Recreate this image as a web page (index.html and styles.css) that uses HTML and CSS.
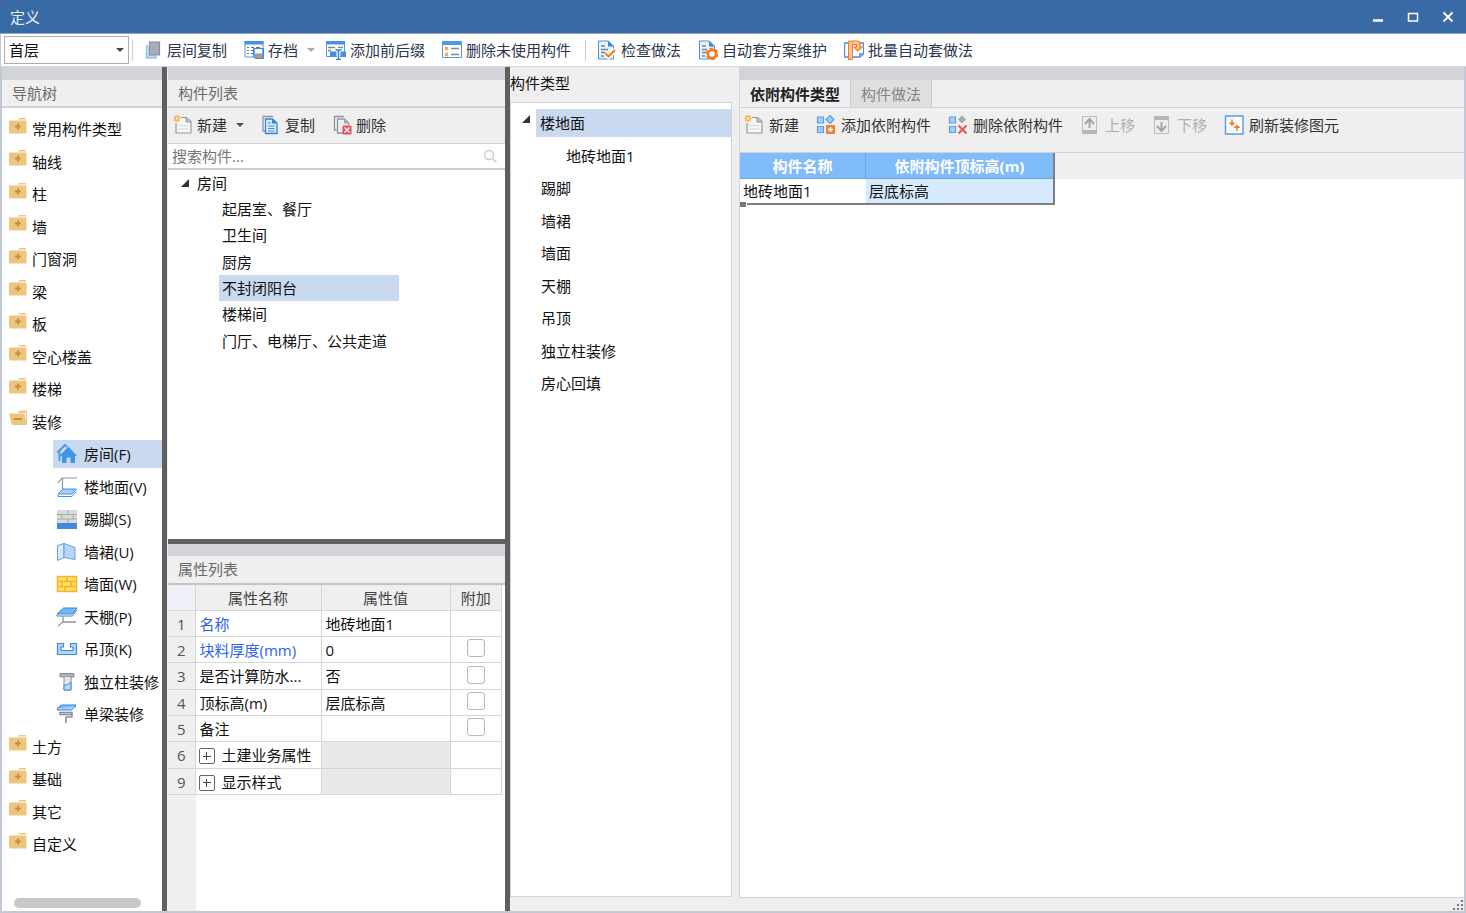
FILE: index.html
```html
<!DOCTYPE html>
<html lang="zh-CN">
<head>
<meta charset="utf-8">
<title>定义</title>
<link rel="stylesheet" href="styles.css">
</head>
<body>
<svg class="sprite" aria-hidden="true">
  <symbol id="folder" viewBox="0 0 18 18"><path d="M9 2.500Q9 1 11 1h5q1 0 1 1.500z" fill="#eac17d"/><rect x="0" y="3.500" width="17.500" height="13" rx="1" fill="#ecc57f"/><path d="M9 6.500v6M6 9.500h6" stroke="#c8923c" stroke-width="2"/></symbol>
  <symbol id="folder-open" viewBox="0 0 18 18"><path d="M9 3q1-1.500 2.500-1.500H18V15l-1-1V4H9z" fill="#efcb8d"/><path d="M0 4.500h14.500q1 0 1.200 1L18 16H4q-1 0-1.300-1z" fill="#ecc57f"/><path d="M5 10h8" stroke="#c8923c" stroke-width="2"/></symbol>
  <symbol id="house" viewBox="0 0 22 22"><path d="M1.500 9.500 9 2l2 2M3.500 9v9" fill="none" stroke="#4b9bea" stroke-width="2"/><path d="M3.500 13 12.500 3.500 21 13h-2v7h-4.500v-5.500h-4V20H6v-7z" fill="#4094e8"/></symbol>
  <symbol id="floor" viewBox="0 0 22 22"><path d="M2 7 6 2h15M6.500 2v11" fill="none" stroke="#8d979e" stroke-width="1.200"/><path d="M2 18 7 13h13.500l-4.500 5z" fill="#a5cdf8" stroke="#4590e2"/><path d="M2 18.500v2h14l4.500-5" fill="none" stroke="#4590e2"/></symbol>
  <symbol id="skirting" viewBox="0 0 22 22"><rect x="1" y="2" width="20" height="14" fill="#d8dadb"/><path d="M1 6.500h20M1 11h20M12 2v4.500M6 6.500V11M17 6.500V11M12 11v4" stroke="#a5abae"/><path d="M1 15h20v6H1z" fill="#3f8bdb"/></symbol>
  <symbol id="dado" viewBox="0 0 22 22"><path d="M1.500 4.500 8 2.500v14l-6.500 3z" fill="#d7e9fc" stroke="#659fe1"/><path d="m8 2.500 11 4v12L8 16.500z" fill="#b5d5fa" stroke="#659fe1"/></symbol>
  <symbol id="wall" viewBox="0 0 22 22"><path d="M1 3h20v16H1z" fill="#ffdf70"/><path d="M1.500 3.500h19v15h-19zM1 8.500h20M1 13.500h20M11 3v5.500M6 8.500v5M15 8.500v5M9 13.500V19" fill="none" stroke="#f8b420" stroke-width="1.500"/></symbol>
  <symbol id="ceiling" viewBox="0 0 22 22"><path d="M1 8 7.500 2H21l-4.500 6z" fill="#77b5f5" stroke="#3c85d5"/><path d="M1 8.500V10h15.500L21 4" fill="none" stroke="#3c85d5"/><path d="M7 10v6L2 20M7 16h13" fill="none" stroke="#8b969d" stroke-width="1.300"/></symbol>
  <symbol id="hanging" viewBox="0 0 22 22"><path d="M1.500 5.500h6V9H5v3.500h12V9h-2.500V5.500h6v11h-19z" fill="#b7d7fa" stroke="#3e88d8" stroke-width="1.200"/></symbol>
  <symbol id="column" viewBox="0 0 22 22"><path d="M4 2.500h14V6H4z" fill="#adb5b9" stroke="#858f95"/><path d="M8 6v13h7V6" fill="#e5e9ec" stroke="#858f95"/><path d="M8 14h3l4-3v8H8z" fill="#b9dafb" stroke="#398adf"/></symbol>
  <symbol id="beam" viewBox="0 0 22 22"><path d="m1.500 5 4-3H20l-4.500 3z" fill="#76b7f7" stroke="#3b86d7"/><path d="M1.500 5v2h14L20 3" fill="#a8d0fb" stroke="#3b86d7"/><path d="M4 9.500h12v2H4zM16 11v3h-6v6" fill="none" stroke="#848f96" stroke-width="1.500"/></symbol>
  <symbol id="layers" viewBox="0 0 20 20"><path d="M5 6H3.500v12H13v-2" fill="#b9ddfc" stroke="#91c3f4" stroke-width="1.500"/><path d="M6.500 2h10v13h-10z" fill="#a9adb9" stroke="#888e9c" stroke-width="1.200"/></symbol>
  <symbol id="archive" viewBox="0 0 20 20"><path d="M1 1.500h18v8h-8V17H1z" fill="#fff" stroke="#5b98dc"/><path d="M.5 1h19v3.500H.5z" fill="#4a91df"/><path d="M3 7.500h2M7 7.500h3M12 7.500h4M3 10.500h2M7 10.500h2M3 13.500h2M7 13.500h2" stroke="#68747d"/><path d="M9.500 8.500h10v10h-8l-2-2z" fill="#65a7ed" stroke="#3e86d5"/><path d="M11 9h7v4.500h-7z" fill="#fff"/><path d="M12.500 15h4.500v3h-4.500z" fill="#f48231"/></symbol>
  <symbol id="prefix" viewBox="0 0 20 20"><path d="M.5 1.500h18v15H.5z" fill="#fff" stroke="#5b98dc"/><path d="M0 1h19v3.500H0z" fill="#4a91df"/><path d="M2 7.500h7M12 7.500h5M2 10.500h3" stroke="#7b8790" stroke-width="1.500"/><path d="M9.500 9.500q3 0 3 2.500v7M15.500 9.500q-3 0-3 2.500M10 19h5" fill="none" stroke="#fff" stroke-width="3"/><path d="M4 11.500h6.500V17H4zM14.500 11.500H20V17h-5.500z" fill="#458ddd"/><path d="M9.500 9.500q3 0 3 2.500v7M15.500 9.500q-3 0-3 2.500M10 19.500h5" fill="none" stroke="#3984da" stroke-width="1.400"/></symbol>
  <symbol id="unused" viewBox="0 0 20 20"><path d="M.5 1.500h19v16H.5z" fill="#fff" stroke="#5b98dc"/><path d="M0 1h20v4H0z" fill="#5099e5"/><path d="m3 7 3 3M6 7l-3 3m0 3 3 3m0-3-3 3" stroke="#f29b3e" stroke-width="1.300"/><path d="M9 8.500h8M9 14.500h8" stroke="#7f8b92" stroke-width="1.300"/></symbol>
  <symbol id="check" viewBox="0 0 20 20"><path d="M1.500 1h10l5 5v13h-15z" fill="#e8f3fe" stroke="#4c90d8"/><path d="M11 1v5.500h5.500z" fill="#3984d6"/><path d="M4 6h4M4 9.500h7M4 12.500h4M4 16h3" stroke="#748693" stroke-width="1.500"/><path d="m8 13 3.500 3.500L18 10" fill="none" stroke="#fff" stroke-width="5"/><path d="m8 13 3.500 3.500L18 10" fill="none" stroke="#f17c25" stroke-width="2"/></symbol>
  <symbol id="gear" viewBox="0 0 20 20"><path d="M1.500 1h10l5 5v13h-15z" fill="#e8f3fe" stroke="#4c90d8"/><path d="M11 1v5.500h5.500z" fill="#3984d6"/><path d="M4 6h4M4 9.500h5M4 12.500h4M4 16h3" stroke="#748693" stroke-width="1.500"/><circle cx="14" cy="14" r="5" fill="none" stroke="#f28530" stroke-width="3" stroke-dasharray="3 2.200"/><circle cx="14" cy="14" r="4" fill="#fff" stroke="#ee7a24" stroke-width="2.500"/></symbol>
  <symbol id="batch" viewBox="0 0 20 20"><path d="M5 3H.5v14H5M14 3h5.500v11L16 17H8" fill="#fff" stroke="#4b90df" stroke-width="1.300"/><path d="M15 17v-4h4" fill="#5b9fe7"/><path d="M4.500 1h4v18.500h-4z" fill="#ffc38f" stroke="#ee7c2a"/><path d="M8.500 1h5q2.500 0 2.500 3v3h2l-4 4-4-4h2.500V4.500h-4" fill="#ffc89a" stroke="#ee7c2a" stroke-width="1.200"/></symbol>
  <symbol id="new" viewBox="0 0 20 20"><path d="M8 2.500h5.500L18 6.500v11.500H3V8" fill="#f6f6f6" stroke="#929a9e" stroke-width="1.200"/><path d="M13 2v5h5" fill="#bbc1c4" stroke="#929a9e"/><path d="M5 10.500h10M5 14h10" stroke="#d4d8dc"/><path d="M4 0v7M.5 3.500h7M1.500 1l5 5m0-5-5 5" stroke="#ffa02d" stroke-width="1.200"/><circle cx="4" cy="3.500" r="1.200" fill="#fff2c7"/></symbol>
  <symbol id="copy" viewBox="0 0 20 20"><path d="M12 1.500H2V16h2" fill="none" stroke="#8b969d" stroke-width="1.300"/><path d="M4.500 4h7L16 8v10.500H4.500z" fill="#d8eafd" stroke="#3a83d2" stroke-width="1.300"/><path d="M11 4v4.500h5z" fill="#3781d2"/><path d="M7 8h3M7 11h6.500M7 13.500h6.500M7 16h6.500" stroke="#438cdc"/></symbol>
  <symbol id="delete" viewBox="0 0 20 20"><path d="M12 1.500H2.500V15h2M11 18H5.500V4h7l4 4v2" fill="none" stroke="#8b969d" stroke-width="1.300"/><path d="M12 4v4.500h5z" fill="#a6adb1"/><rect x="10.500" y="10.500" width="9" height="9" rx="1" fill="#dc5560"/><path d="m12.500 12.500 5 5m0-5-5 5" stroke="#fff" stroke-width="1.200"/></symbol>
  <symbol id="add-part" viewBox="0 0 20 20"><path d="M1.500 2h6v6h-6zM1.500 11.500h6v6h-6zM14 .5 18 4.500l-4 4-4-4z" fill="#a6cdf7" stroke="#5a9de5" stroke-width="1.200"/><path d="M10 10h9v9h-9z" fill="#f28232"/><path d="M14.500 12v5M12 14.500h5" stroke="#fff" stroke-width="1.500"/></symbol>
  <symbol id="remove-part" viewBox="0 0 20 20"><path d="M1.500 2h6v6h-6zM1.500 11.500h6v6h-6z" fill="#a6cdf7" stroke="#5a9de5" stroke-width="1.200"/><path d="m14 .5 4 4-4 4-4-4z" fill="#a3aaab"/><path d="m10.500 10.500 8 8m0-8-8 8" stroke="#de6050" stroke-width="2.200"/></symbol>
  <symbol id="up" viewBox="0 0 20 20"><path d="M2.500 1.500h14v17h-14z" fill="#ededed" stroke="#bdbdbd"/><path d="M2 15h15v4H2z" fill="#b7b7b7"/><path d="M9.500 13V5M5 9l4.500-5L14 9" fill="none" stroke="#a5a5a5" stroke-width="2"/></symbol>
  <symbol id="down" viewBox="0 0 20 20"><path d="M2.500 1.500h14v17h-14z" fill="#ededed" stroke="#bdbdbd"/><path d="M2 1h15v4H2z" fill="#b7b7b7"/><path d="M9.500 7v8M5 11l4.500 5 4.500-5" fill="none" stroke="#a5a5a5" stroke-width="2"/></symbol>
  <symbol id="refresh" viewBox="0 0 20 20"><path d="M1.500 1h17.500v18H1.500z" fill="#f8fbff" stroke="#559ce9" stroke-width="1.400"/><path d="M8 4.500V9M13 16v-4.500" fill="none" stroke="#f17f2a" stroke-width="1.500"/><path d="M4.500 7.500h7L8 11zM9.500 13h7L13 9.500z" fill="#f17f2a"/></symbol>
</svg>

<div class="window">
  <header class="titlebar">
    <h1>定义</h1>
    <div class="window-controls">
      <button aria-label="最小化"><svg viewBox="0 0 12 12"><path d="M1 9.500h10" stroke="#fff" stroke-width="2.500"/></svg></button>
      <button aria-label="最大化"><svg viewBox="0 0 12 12"><path d="M1.500 2v8h9V2M1 2.500h10" fill="none" stroke="#fff" stroke-width="1.500"/></svg></button>
      <button aria-label="关闭"><svg viewBox="0 0 12 12"><path d="m1.500 1.500 9 9m0-9-9 9" stroke="#fff" stroke-width="2"/></svg></button>
    </div>
  </header>

  <div class="main-toolbar">
    <div class="floor-select"><select aria-label="楼层"><option>首层</option></select></div>
    <span class="separator"></span>
    <div class="tools">
      <button class="tool"><svg><use href="#layers"/></svg>层间复制</button>
      <button class="tool"><svg><use href="#archive"/></svg>存档<i class="arrow pale"></i></button>
      <button class="tool"><svg><use href="#prefix"/></svg>添加前后缀</button>
      <button class="tool"><svg><use href="#unused"/></svg>删除未使用构件</button>
    </div>
    <span class="separator"></span>
    <div class="tools">
      <button class="tool"><svg><use href="#check"/></svg>检查做法</button>
      <button class="tool"><svg><use href="#gear"/></svg>自动套方案维护</button>
      <button class="tool"><svg><use href="#batch"/></svg>批量自动套做法</button>
    </div>
  </div>

  <main class="workspace">
    <nav class="panel nav-panel">
      <h2 class="panel-title">导航树</h2>
      <ul class="nav-tree">
        <li><svg><use href="#folder"/></svg>常用构件类型</li>
        <li><svg><use href="#folder"/></svg>轴线</li>
        <li><svg><use href="#folder"/></svg>柱</li>
        <li><svg><use href="#folder"/></svg>墙</li>
        <li><svg><use href="#folder"/></svg>门窗洞</li>
        <li><svg><use href="#folder"/></svg>梁</li>
        <li><svg><use href="#folder"/></svg>板</li>
        <li><svg><use href="#folder"/></svg>空心楼盖</li>
        <li><svg><use href="#folder"/></svg>楼梯</li>
        <li><svg><use href="#folder-open"/></svg>装修</li>
        <li class="child"><span class="node selected"><svg><use href="#house"/></svg>房间(F)</span></li>
        <li class="child"><span class="node"><svg><use href="#floor"/></svg>楼地面(V)</span></li>
        <li class="child"><span class="node"><svg><use href="#skirting"/></svg>踢脚(S)</span></li>
        <li class="child"><span class="node"><svg><use href="#dado"/></svg>墙裙(U)</span></li>
        <li class="child"><span class="node"><svg><use href="#wall"/></svg>墙面(W)</span></li>
        <li class="child"><span class="node"><svg><use href="#ceiling"/></svg>天棚(P)</span></li>
        <li class="child"><span class="node"><svg><use href="#hanging"/></svg>吊顶(K)</span></li>
        <li class="child"><span class="node"><svg><use href="#column"/></svg>独立柱装修</span></li>
        <li class="child"><span class="node"><svg><use href="#beam"/></svg>单梁装修</span></li>
        <li><svg><use href="#folder"/></svg>土方</li>
        <li><svg><use href="#folder"/></svg>基础</li>
        <li><svg><use href="#folder"/></svg>其它</li>
        <li><svg><use href="#folder"/></svg>自定义</li>
      </ul>
      <div class="scroll-thumb"></div>
    </nav>

    <div class="splitter"></div>

    <div class="middle">
      <section class="panel">
        <h2 class="panel-title">构件列表</h2>
        <div class="list-toolbar">
          <button class="tool"><svg><use href="#new"/></svg>新建<i class="arrow"></i></button>
          <button class="tool"><svg><use href="#copy"/></svg>复制</button>
          <button class="tool"><svg><use href="#delete"/></svg>删除</button>
        </div>
        <div class="search">
          <input type="text" placeholder="搜索构件..." aria-label="搜索构件">
          <svg viewBox="0 0 14 14"><circle cx="6" cy="6" r="4.500" fill="none" stroke="#ccc" stroke-width="1.300"/><path d="m9.500 9.500 4 4" stroke="#ccc" stroke-width="1.500"/></svg>
        </div>
        <ul class="component-tree">
          <li class="root"><svg class="expander" viewBox="0 0 8 8"><path d="M8 0v8H0z"/></svg>房间</li>
          <li><span>起居室、餐厅</span></li>
          <li><span>卫生间</span></li>
          <li><span>厨房</span></li>
          <li><span class="selected">不封闭阳台</span></li>
          <li><span>楼梯间</span></li>
          <li><span>门厅、电梯厅、公共走道</span></li>
        </ul>
      </section>
      <div class="splitter"></div>
      <section class="panel">
        <h2 class="panel-title strong-line">属性列表</h2>
        <div class="property-area">
          <table class="properties">
            <thead><tr><th class="corner"></th><th>属性名称</th><th>属性值</th><th>附加</th></tr></thead>
            <tbody>
              <tr><th>1</th><td class="link">名称</td><td>地砖地面1</td><td></td></tr>
              <tr><th>2</th><td class="link">块料厚度(mm)</td><td>0</td><td class="tick"><input type="checkbox" aria-label="附加块料厚度"></td></tr>
              <tr><th>3</th><td>是否计算防水...</td><td>否</td><td class="tick"><input type="checkbox" aria-label="附加是否计算防水"></td></tr>
              <tr><th>4</th><td>顶标高(m)</td><td>层底标高</td><td class="tick"><input type="checkbox" aria-label="附加顶标高"></td></tr>
              <tr><th>5</th><td>备注</td><td></td><td class="tick"><input type="checkbox" aria-label="附加备注"></td></tr>
              <tr><th>6</th><td class="group"><button aria-label="展开土建业务属性"></button>土建业务属性</td><td class="off"></td><td></td></tr>
              <tr><th>9</th><td class="group"><button aria-label="展开显示样式"></button>显示样式</td><td class="off"></td><td></td></tr>
            </tbody>
          </table>
        </div>
      </section>
    </div>

    <div class="splitter"></div>

    <section class="types">
      <h2>构件类型</h2>
      <ul class="type-tree">
        <li><svg class="expander" viewBox="0 0 8 8"><path d="M8 0v8H0z"/></svg><span class="selected">楼地面</span></li>
        <li class="leaf">地砖地面1</li>
        <li>踢脚</li>
        <li>墙裙</li>
        <li>墙面</li>
        <li>天棚</li>
        <li>吊顶</li>
        <li>独立柱装修</li>
        <li>房心回填</li>
      </ul>
    </section>

    <section class="panel detail">
      <div class="tabs" role="tablist">
        <button role="tab" aria-selected="true">依附构件类型</button>
        <button role="tab" aria-selected="false">构件做法</button>
      </div>
      <div class="detail-toolbar">
        <button class="tool"><svg><use href="#new"/></svg>新建</button>
        <button class="tool"><svg><use href="#add-part"/></svg>添加依附构件</button>
        <button class="tool"><svg><use href="#remove-part"/></svg>删除依附构件</button>
        <button class="tool" disabled><svg><use href="#up"/></svg>上移</button>
        <button class="tool" disabled><svg><use href="#down"/></svg>下移</button>
        <button class="tool"><svg><use href="#refresh"/></svg>刷新装修图元</button>
      </div>
      <div class="sheet">
        <div class="sheet-head">
          <table class="parts">
            <thead><tr><th>构件名称</th><th>依附构件顶标高(m)</th></tr></thead>
            <tbody><tr><td>地砖地面1</td><td class="current">层底标高</td></tr></tbody>
          </table>
        </div>
      </div>
      <footer class="status"><svg viewBox="0 0 12 12"><path d="M9 1h2v2H9zM9 5h2v2H9zM9 9h2v2H9zM5 5h2v2H5zM5 9h2v2H5zM1 9h2v2H1z" fill="#777"/></svg></footer>
    </section>
  </main>
</div>
</body>
</html>
```

FILE: styles.css
```css
* { box-sizing: border-box; }

body {
  margin: 0;
  color: #111;
  font: 15px/20px "Open Sans", "Noto Sans CJK SC", sans-serif;
}

h1, h2, ul { margin: 0; padding: 0; font-size: 15px; font-weight: 400; list-style: none; }
button, input, select { margin: 0; padding: 0; border: 0; background: none; color: inherit; font: inherit; }
svg { display: block; flex: none; }
.sprite { position: absolute; width: 0; height: 0; }

.window {
  display: flex;
  flex-direction: column;
  height: 100vh;
  border-bottom: 2px solid #c3cad5;
  background: #efefef;
}

/* Title bar */
.titlebar {
  display: flex;
  align-items: center;
  justify-content: space-between;
  height: 34px;
  padding: 0 12px 0 10px;
  border-bottom: 1px solid #8fa6c6;
  background: #386aa6;
  color: #e8eef6;
}
.window-controls { display: flex; gap: 23px; }
.window-controls svg { width: 12px; height: 12px; }

/* Toolbars */
.main-toolbar {
  display: flex;
  align-items: center;
  height: 33px;
  padding-left: 3px;
  border-left: 1px solid #c3cad5;
  border-bottom: 1px solid #d5d6da;
  background: #fff;
  color: #2d3650;
}
.floor-select { position: relative; width: 125px; }
.floor-select select {
  width: 100%;
  height: 28px;
  padding-left: 4px;
  border: 1px solid #adadad;
  appearance: none;
  background: #fff;
  color: #111;
}
.floor-select::after {
  content: "";
  position: absolute;
  top: 12px;
  right: 5px;
  border: 4px solid transparent;
  border-top-color: #444;
  border-bottom: 0;
}
.separator { width: 1px; height: 21px; margin: 0 10px 0 3px; background: #d0d0d0; }
.tools + .separator { margin: 0 11px 0 14px; }
.tools { display: flex; gap: 17px; }
.tool { display: flex; align-items: center; gap: 4px; white-space: nowrap; }
.tool svg { width: 20px; height: 20px; }
.tool:disabled { color: #b0b0b0; }
.arrow {
  margin-left: 5px;
  border: 4px solid transparent;
  border-top-color: #555;
  border-bottom: 0;
}
.arrow.pale { border-top-color: #aaa; }
.tools .arrow { margin-right: -6px; }

/* Panels */
.workspace {
  display: grid;
  grid-template-columns: 160px 5px 338px 5px 222px minmax(0, 1fr);
  flex: 1;
  min-height: 0;
  border-left: 2px solid #c0c8d8;
  border-right: 2px solid #c3cad5;
}
.panel {
  display: flex;
  flex-direction: column;
  min-width: 0;
  min-height: 0;
  border-top: 13px solid #d3d4da;
}
.panel-title {
  flex: none;
  height: 28px;
  padding: 3px 10px;
  border-bottom: 2px solid #cfd3d7;
  color: #6b6b6b;
}
.splitter { background: #5f5f5f; }
.selected { background: #c9d9ef; }
.expander { width: 8px; height: 8px; fill: #333; }

/* Navigation */
.nav-tree { flex: 1; padding-top: 5px; background: #fff; overflow: hidden; }
.nav-tree li { display: flex; align-items: center; height: 32px; padding-left: 7px; gap: 5px; white-space: nowrap; }
.nav-tree li:nth-child(even) { height: 33px; }
.nav-tree svg { width: 18px; height: 18px; margin-bottom: 7px; }
.nav-tree .child { padding-left: 51px; }
.node { display: flex; flex: 1; align-items: center; gap: 6px; height: 28px; padding-left: 3px; }
.nav-tree .node svg { width: 22px; height: 22px; margin-bottom: 0; }
.scroll-thumb { width: 127px; height: 10px; margin: 0 12px 3px; border-radius: 5px; background: #c8c8c8; }
.nav-panel { background: #fff; }
.nav-panel .panel-title { background: #efefef; }

/* Component list */
.middle { display: grid; grid-template-rows: minmax(0, 9fr) 5px minmax(0, 7fr); padding-left: 1px; }
.list-toolbar { display: flex; align-items: center; height: 36px; gap: 17px; padding: 0 5px 2px; border-bottom: 1px solid #cfd3d7; color: #333; }
.search { display: flex; align-items: center; height: 26px; padding: 0 8px 0 4px; border-bottom: 2px solid #c9ccd2; background: #fff; }
.search input { flex: 1; min-width: 0; height: 24px; }
.search input::placeholder { color: #777; }
.search svg { width: 14px; height: 14px; }
.component-tree { flex: 1; background: #fff; overflow: hidden; }
.component-tree li { height: 26px; padding-left: 51px; line-height: 26px; }
.component-tree li:nth-child(3n) { height: 27px; }
.component-tree span { display: block; width: 180px; padding-left: 3px; white-space: nowrap; }
.component-tree .root { display: flex; align-items: center; gap: 8px; padding-left: 13px; }

/* Properties */
.middle .panel + .splitter + .panel { border-top-width: 12px; }
.panel-title.strong-line { height: 29px; border-bottom-color: #c3c3c5; }
.property-area { flex: 1; background: linear-gradient(to right, #efefef 28px, #fff 28px); overflow: hidden; }
.properties { width: 334px; border-collapse: collapse; table-layout: fixed; }
.properties th, .properties td { height: 26px; padding: 0 4px; border: 1px solid #d6d6d6; border-left: 0; font-weight: 400; line-height: 20px; white-space: nowrap; }
.properties tr:nth-child(3n) td { height: 27px; }
.properties thead th { border-top: 0; color: #444; }
.properties .corner { width: 27px; background: #edf0f6; }
.properties thead th:nth-child(2) { width: 126px; }
.properties thead th:nth-child(3) { width: 129px; }
.properties th { background: #efefef; color: #555; }
.properties td { background: #fff; }
.properties .link { color: #2b63f0; }
.properties .off { background: #e9e9e9; }
.properties .tick { text-align: center; }
.tick input { display: block; width: 18px; height: 18px; margin: 0 auto 3px; border: 1px solid #b9b9b9; border-radius: 3px; appearance: none; background: #fff; }
.group button {
  width: 16px;
  height: 16px;
  margin-right: 7px;
  border: 1px solid #666;
  border-radius: 2px;
  background: linear-gradient(#444, #444) center / 8px 1px no-repeat, linear-gradient(#444, #444) center / 1px 8px no-repeat;
  vertical-align: -2px;
}
.properties .group { padding-left: 3px; }

/* Component types */
.types { display: flex; flex-direction: column; min-height: 0; padding-bottom: 14px; }
.types h2 { height: 35px; padding-top: 6px; }
.type-tree { flex: 1; padding-top: 4px; border: 1px solid #d0d3d8; background: #fff; overflow: hidden; }
.type-tree li { display: flex; align-items: center; height: 32px; padding-left: 30px; }
.type-tree li:nth-child(even) { height: 33px; }
.type-tree li:first-child { gap: 6px; padding-left: 11px; }
.type-tree .leaf { padding-left: 55px; }
.type-tree .expander { margin-bottom: 8px; }
.type-tree span { flex: 1; padding: 4px; }

/* Detail */
.detail { margin-left: 7px; }
.tabs { display: flex; height: 28px; border-bottom: 1px solid #cfd3d7; border-left: 1px solid #cfd3d7; }
.tabs button { padding: 0 10px; border-right: 1px solid #c9cdd2; background: #dfdfdf; color: #858585; }
.tabs [aria-selected="true"] { background: #efefef; color: #222; font-weight: 700; }
.detail-toolbar { display: flex; gap: 17px; height: 44px; padding: 7px 4px 17px; border-left: 1px solid #cfd3d7; color: #333; }
.detail-toolbar .tool { gap: 5px; }
.sheet { flex: 1; min-height: 0; border: 1px solid #cfd3d7; border-right: 0; background: #fff; }
.sheet-head { height: 26px; background: #efefef; }
.parts { position: relative; width: 315px; border-collapse: separate; border-spacing: 0; border-right: 2px solid #7d7f82; border-bottom: 2px solid #7d7f82; table-layout: fixed; }
.parts::after { content: ""; position: absolute; left: 0; bottom: -4px; width: 6px; height: 5px; border-right: 1px solid #fff; background: #777; }
.parts th { width: 126px; height: 26px; padding: 0; border-right: 1px solid #6ba8e8; border-bottom: 1px solid #6ba8e8; background: #80bbfa; color: #fff; }
.parts th:last-child { width: auto; border-right: 0; }
.parts td { height: 24px; padding: 0 3px; background: #fff; }
.parts .current { background: #d6e9fd; }
.status { display: flex; align-items: center; justify-content: flex-end; height: 13px; }
.status svg { width: 12px; height: 12px; }
```
